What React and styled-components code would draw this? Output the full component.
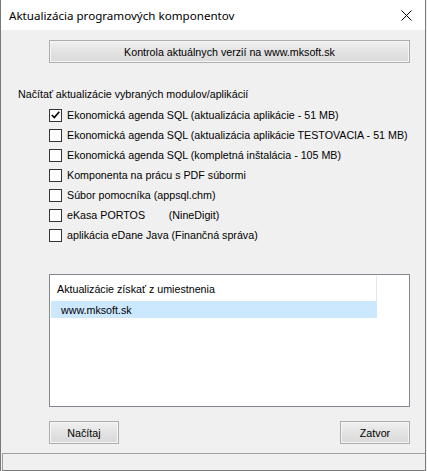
import React from "react";
import styled, { createGlobalStyle } from "styled-components";

const GlobalStyle = createGlobalStyle`
  html, body {
    margin: 0;
    padding: 0;
    background: #f0f0f0;
  }
  body {
    width: 427px;
    height: 471px;
    overflow: hidden;
  }
`;

const Window = styled.div`
  width: 426px;
  height: 471px;
  box-sizing: border-box;
  border-left: 1px solid #7a7a7a;
  border-right: 1px solid #7a7a7a;
  display: flex;
  flex-direction: column;
  background: #f0f0f0;
  font-family: "Liberation Sans", Arial, sans-serif;
  font-size: 10.7px;
  color: #000;
`;

const TitleBar = styled.div`
  height: 30px;
  background: #fff;
  display: flex;
  align-items: center;
  justify-content: space-between;
  padding-left: 8px;
  flex-shrink: 0;
`;

const Title = styled.span`
  font-family: "Noto Sans", "Open Sans", sans-serif;
  font-size: 11.6px;
  color: #000;
`;

const CloseBtn = styled.div`
  width: 38px;
  height: 30px;
  display: flex;
  align-items: center;
  justify-content: center;
`;

const Client = styled.div`
  flex: 1;
  display: flex;
  flex-direction: column;
  padding: 10px 14px 0 48px;
`;

const Button = styled.div`
  box-sizing: border-box;
  height: 23px;
  width: ${(p) => p.$w || 70}px;
  border: 1px solid #adadad;
  background: linear-gradient(#f0f0f0, #e3e3e3 50%, #dadada);
  box-shadow: inset 0 0 0 1px #f6f6f6;
  display: flex;
  align-items: center;
  justify-content: center;
`;

const SectionLabel = styled.div`
  margin: 25px 0 4px -31px;
  line-height: 13px;
`;

const Row = styled.label`
  height: 20px;
  display: flex;
  align-items: center;
  gap: 5px;
  white-space: pre;
`;

const Box = styled.span`
  flex-shrink: 0;
  width: 13px;
  height: 13px;
  box-sizing: border-box;
  border: 1px solid #333;
  background: #fff;
  display: flex;
  align-items: center;
  justify-content: center;
`;

const ListBox = styled.div`
  margin-top: 29px;
  width: 361px;
  height: 133px;
  box-sizing: border-box;
  border: 1px solid #828790;
  background: #fff;
  padding: 1px;
`;

const Header = styled.div`
  width: 326px;
  height: 25px;
  box-sizing: border-box;
  border-right: 1px solid #e5e5e5;
  display: flex;
  align-items: center;
  padding-left: 6px;
`;

const ListItem = styled.div`
  width: 326px;
  height: 17px;
  background: ${(p) => (p.$selected ? "#cce8ff" : "transparent")};
  display: flex;
  align-items: center;
  padding-left: 10px;
  box-sizing: border-box;
`;

const ButtonRow = styled.div`
  margin-top: 14px;
  width: 361px;
  display: flex;
  justify-content: space-between;
`;

const StatusBar = styled.div`
  margin-top: auto;
  height: 18px;
  box-sizing: border-box;
  border-top: 1px solid #a0a0a0;
  border-left: 1px solid #a0a0a0;
  border-bottom: 1px solid #7a7a7a;
  background: #f0f0f0;
  margin-left: 1px;
`;

const items = [
  { text: "Ekonomická agenda SQL (aktualizácia aplikácie - 51 MB)", checked: true },
  { text: "Ekonomická agenda SQL (aktualizácia aplikácie TESTOVACIA - 51 MB)" },
  { text: "Ekonomická agenda SQL (kompletná inštalácia - 105 MB)" },
  { text: "Komponenta na prácu s PDF súbormi" },
  { text: "Súbor pomocníka (appsql.chm)" },
  { text: "eKasa PORTOS        (NineDigit)" },
  { text: "aplikácia eDane Java (Finančná správa)" },
];

function Check() {
  return (
    <svg width="9" height="8" viewBox="0 0 9 8">
      <path d="M0.8 4 L3.3 6.6 L8.3 0.8" fill="none" stroke="#000" strokeWidth="1.6" />
    </svg>
  );
}

export default function App() {
  return (
    <>
      <GlobalStyle />
      <Window>
        <TitleBar>
          <Title>Aktualizácia programových komponentov</Title>
          <CloseBtn>
            <svg width="11" height="11" viewBox="0 0 11 11">
              <path d="M0.5 0.5 L10.5 10.5 M10.5 0.5 L0.5 10.5" stroke="#000" strokeWidth="1" />
            </svg>
          </CloseBtn>
        </TitleBar>
        <Client>
          <Button $w={361}>Kontrola aktuálnych verzií na www.mksoft.sk</Button>
          <SectionLabel>Načítať aktualizácie vybraných modulov/aplikácií</SectionLabel>
          {items.map((it) => (
            <Row key={it.text}>
              <Box>{it.checked && <Check />}</Box>
              {it.text}
            </Row>
          ))}
          <ListBox>
            <Header>Aktualizácie získať z umiestnenia</Header>
            <ListItem $selected>www.mksoft.sk</ListItem>
          </ListBox>
          <ButtonRow>
            <Button>Načítaj</Button>
            <Button>Zatvor</Button>
          </ButtonRow>
        </Client>
        <StatusBar />
      </Window>
    </>
  );
}
